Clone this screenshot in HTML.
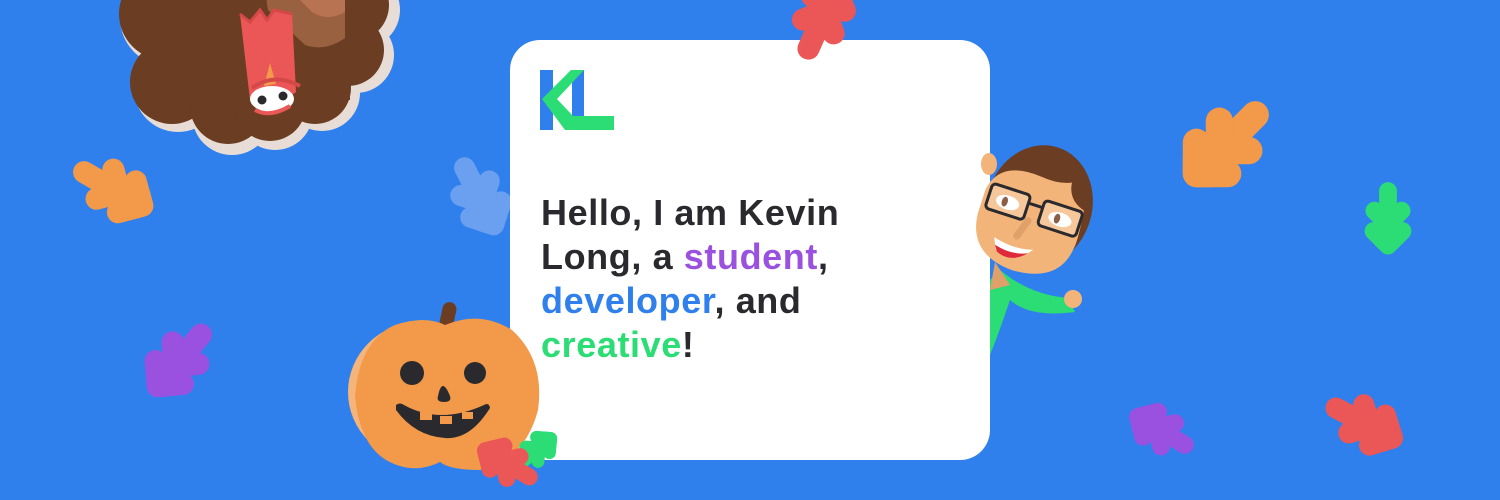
<!DOCTYPE html>
<html><head><meta charset="utf-8"><style>
html,body{margin:0;padding:0}
body{width:1500px;height:500px;overflow:hidden;background:#2f80ec;position:relative;font-family:"Liberation Sans",sans-serif}
svg{position:absolute;left:0;top:0}
.t{position:absolute;left:541px;top:191px;font-size:36px;font-weight:bold;line-height:44px;color:#2a2a2e;letter-spacing:0.6px;white-space:nowrap}
</style></head><body>
<svg width="1500" height="500" viewBox="0 0 1500 500">
<defs>
<g id="lf" fill="none" stroke-linecap="round" stroke-linejoin="round" stroke-width="21">
<path d="M0,-34 L0,22"/>
<path d="M-16,-11 L0,5 L16,-11"/>
<path d="M-17,13 L0,30 L17,13"/>
<path d="M-8,22 L0,30 L8,22 L0,15Z" stroke-width="21"/>
</g>
</defs>
<use href="#lf" stroke="#f2994a" transform="translate(115,190) rotate(-60) scale(1.05)"/>
<use href="#lf" stroke="#9b51e0" transform="translate(178,362) rotate(40) scale(1.05)"/>
<use href="#lf" stroke="#6aa0ef" transform="translate(480,198) rotate(-27) scale(1.0)"/>
<use href="#lf" stroke="#f2994a" transform="translate(1224,146) rotate(45) scale(1.3)"/>
<use href="#lf" stroke="#2cdc74" transform="translate(1388,220) scale(0.85)"/>
<use href="#lf" stroke="#9b51e0" transform="translate(1160,430) rotate(121) scale(0.85)"/>
<use href="#lf" stroke="#eb5757" transform="translate(1366,424) rotate(-62) scale(1.0)"/>

<!-- turkey -->
<g>
<g fill="#e8ddd6">
<circle cx="168" cy="18" r="48"/><circle cx="178" cy="88" r="44"/><circle cx="232" cy="115" r="40"/>
<circle cx="275" cy="112" r="38"/><circle cx="322" cy="93" r="38"/><circle cx="356" cy="55" r="38"/>
<circle cx="362" cy="10" r="38"/>
</g>
<g fill="#6b3d22">
<circle cx="165" cy="14" r="46"/><circle cx="172" cy="82" r="42"/><circle cx="228" cy="106" r="38"/>
<circle cx="270" cy="105" r="36"/><circle cx="315" cy="88" r="36"/><circle cx="348" cy="50" r="36"/>
<circle cx="353" cy="5" r="36"/>
<rect x="170" y="-10" width="180" height="110"/>
</g>
<path d="M265,-10 L345,-10 L345,38 Q325,52 305,45 L268,10Z" fill="#9a6140"/>
<path d="M290,-10 L345,-10 L345,12 Q328,22 312,12Z" fill="#b87352"/>
<path d="M240,14 L250,22 L260,10 L267,20 L274,10 L292,14 L296,92 Q272,112 250,100Z" fill="#eb5757"/>
<path d="M240,14 L250,22 L260,10 L267,20 L274,10 L292,14" fill="none" stroke="#d54848" stroke-width="3"/>
<path d="M264,86 L270,63 L276,84Z" fill="#f2994a"/>
<path d="M252,88 Q274,72 300,86" fill="none" stroke="#d54848" stroke-width="4"/>
<ellipse cx="272" cy="99" rx="22" ry="13" fill="#fff"/>
<circle cx="262" cy="100" r="4.5" fill="#2a2a2e"/><circle cx="283" cy="96" r="4.5" fill="#2a2a2e"/>
<path d="M255,110 Q270,118 290,106" fill="none" stroke="#eb5757" stroke-width="4"/>
</g>

<!-- card -->
<rect x="510" y="40" width="480" height="420" rx="30" fill="#fff"/>
<use href="#lf" stroke="#eb5757" transform="translate(823,16) rotate(-156) scale(1.05)"/>
<rect x="540" y="70" width="13" height="60" fill="#2f80ec"/>
<rect x="572" y="70" width="12" height="48" fill="#2f80ec"/>
<polygon points="571,70 584,70 557,99 573,116 614,116 614,130 565,130 542,99" fill="#2cdc74"/>

<!-- guy -->
<path d="M990,280 L1000,270 Q1030,295 1068,298 L1075,312 Q1030,318 1010,300 Q1000,330 990,355Z" fill="#2cdc74"/>
<circle cx="1073" cy="299" r="9" fill="#f3b47a"/>
<ellipse cx="989" cy="164" rx="8" ry="11" fill="#f3b47a"/>
<path d="M995,262 L1010,285 L990,290Z" fill="#e0a06a"/>
<g transform="rotate(18 1033 215)">
<ellipse cx="1036" cy="205" rx="53" ry="62" fill="#6b3d22"/>
<path d="M980,205 Q985,172 1030,176 Q1048,178 1060,172 Q1062,190 1080,195 Q1084,225 1082,235 Q1078,272 1030,274 Q983,272 980,230Z" fill="#f3b47a"/>
<rect x="985" y="197" width="40" height="26" rx="4" fill="#f6c79b" stroke="#2a2a2e" stroke-width="3"/>
<rect x="1040" y="197" width="40" height="26" rx="4" fill="#f6c79b" stroke="#2a2a2e" stroke-width="3"/>
<line x1="1025" y1="205" x2="1040" y2="205" stroke="#2a2a2e" stroke-width="3"/>
<ellipse cx="1005" cy="211" rx="12" ry="7" fill="#fff"/><ellipse cx="1060" cy="211" rx="12" ry="7" fill="#fff"/>
<ellipse cx="1002" cy="211" rx="3" ry="5" fill="#8b5e45"/><ellipse cx="1057" cy="211" rx="3" ry="5" fill="#8b5e45"/>
<path d="M1030,222 L1024,240" stroke="#e0a06a" stroke-width="7" stroke-linecap="round"/>
<path d="M1003,248 Q1025,254 1044,248 Q1028,270 1008,259Z" fill="#fff"/>
<path d="M1006,255 Q1025,260 1040,253 Q1026,268 1010,261Z" fill="#e0283b"/>
</g>

<!-- pumpkin -->
<rect x="441" y="302" width="14" height="28" rx="7" fill="#6b3d22" transform="rotate(12 448 316)"/>
<ellipse cx="420" cy="392" rx="72" ry="70" fill="#f5b57a"/>
<path d="M445,325 Q480,310 512,330 Q545,360 538,410 Q525,460 480,470 Q450,470 440,462 Q420,472 400,466 Q360,455 355,395 Q360,340 395,325 Q425,315 445,325Z" fill="#f2994a"/>
<circle cx="412" cy="373" r="12" fill="#2a2a2e"/><circle cx="475" cy="373" r="11" fill="#2a2a2e"/>
<path d="M443,386 Q446,386 450,396 Q452,402 444,402 Q436,402 438,396 Q440,386 443,386Z" fill="#2a2a2e"/>
<path d="M396,405 Q400,402 404,405 Q440,425 484,405 Q489,402 490,408 Q470,440 445,438 Q415,436 396,410Z" fill="#2a2a2e"/>
<rect x="420" y="412" width="12" height="8" fill="#f2994a"/>
<rect x="440" y="416" width="12" height="8" fill="#f2994a"/>
<rect x="462" y="412" width="11" height="7" fill="#f2994a"/>
<use href="#lf" stroke="#2cdc74" transform="translate(537,450) rotate(-130) scale(0.6)"/>
<use href="#lf" stroke="#eb5757" transform="translate(506,463) rotate(121) scale(0.8)"/>
</svg>
<div class="t">Hello, I am Kevin<br>Long, a <span style="color:#9b51e0">student</span>,<br><span style="color:#2f80ec">developer</span>, and<br><span style="color:#2cdc74">creative</span>!</div>
</body></html>
